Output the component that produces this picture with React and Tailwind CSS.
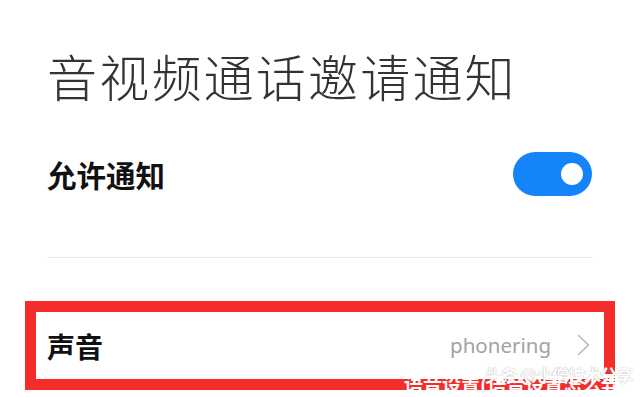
const cjk = { fontFamily: '"Noto Sans CJK SC", "Noto Sans", sans-serif' };

const App = () => {
    return (
        <div className="relative w-[640px] h-[397px] overflow-hidden bg-white" style={cjk}>
            <div className="px-[47px]">
                {/* Title */}
                <h1 className="pt-[50px] text-[50px] leading-[50px] font-light text-[#333333] tracking-[2.2px] whitespace-nowrap">
                    音视频通话邀请通知
                </h1>

                {/* Allow notifications */}
                <div className="mt-[52px] flex items-center justify-between h-[44px]">
                    <span className="text-[29.5px] font-bold text-[#111111]">允许通知</span>
                    <div className="w-[79px] h-[44px] mr-[1px] rounded-full bg-[#1485f8] flex items-center justify-end pr-[9px]">
                        <div className="w-[22px] h-[22px] rounded-full bg-white" />
                    </div>
                </div>

                <div className="mt-[61px] h-px bg-[#e6e6e6]" />

                {/* Sound row, highlighted */}
                <div className="-mx-[22px] mt-[43px] h-[89px] border-[11px] border-[#f52d2a] flex items-center justify-between pl-[11px] pr-[14px]">
                    <span className="text-[28px] font-bold text-[#111111]">声音</span>
                    <div className="flex items-center gap-[26px]">
                        <span className="text-[20.5px] text-[#a3a3a3]" style={{ fontFamily: '"Noto Sans", sans-serif' }}>phonering</span>
                        <svg width="13" height="22" viewBox="0 0 13 22" fill="none" className="-mt-[2px]">
                            <polyline points="1.5,1.5 11.5,11 1.5,20.5" stroke="#b8b8b8" strokeWidth="1.6" strokeLinecap="round" strokeLinejoin="round" />
                        </svg>
                    </div>
                </div>
            </div>

            {/* Watermark */}
            <div className="absolute right-[8px] top-[366px] text-[17px] leading-[18px] font-bold text-white tracking-[-1px] [text-shadow:0_0_1px_#888]">
                头条 @小僧技术分享
            </div>
            <div className="absolute left-[404px] top-[374px] text-[19px] leading-[20px] font-bold text-white whitespace-nowrap">
                语音设置(语音设置怎么弄
            </div>
        </div>
    );
};

export default App;
